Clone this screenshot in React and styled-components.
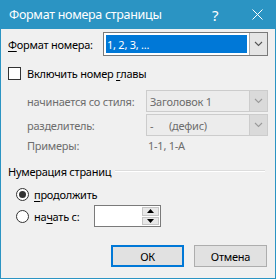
import React from 'react';
import styled, { createGlobalStyle } from 'styled-components';

const GlobalStyle = createGlobalStyle`
    html, body {
        margin: 0;
        padding: 0;
        background: #ffffff;
    }
    body {
        font-family: "Noto Sans", "Open Sans", Arial, sans-serif;
        font-size: 11px;
        letter-spacing: -0.25px;
        color: #000;
    }
`;

const ACCENT = '#2b94c3';

const Dialog = styled.div`
    width: 276px;
    height: 279px;
    box-sizing: border-box;
    border: 1px solid ${ACCENT};
    border-top: none;
    background: #f0f0f0;
    display: flex;
    flex-direction: column;
`;

const TitleBar = styled.div`
    height: 29px;
    background: ${ACCENT};
    color: #fff;
    display: flex;
    align-items: center;
    padding-left: 9px;
    font-size: 12.5px;
    letter-spacing: -0.3px;
    margin: 0 -1px;
`;

const Title = styled.span`
    flex: 1;
`;

const TitleButton = styled.span`
    width: ${(p) => p.w}px;
    display: flex;
    justify-content: center;
    align-items: center;
    font-size: 15px;
`;

const Body = styled.div`
    flex: 1;
    display: flex;
    flex-direction: column;
    padding: 3px 7px 0 7px;
`;

const Row = styled.div`
    display: flex;
    align-items: center;
    height: ${(p) => p.h || 22}px;
    margin-top: ${(p) => p.mt || 0}px;
    padding-left: ${(p) => p.indent || 0}px;
`;

const Label = styled.span`
    color: ${(p) => (p.disabled ? '#6d6d6d' : '#000')};
    width: ${(p) => (p.w ? `${p.w}px` : 'auto')};
    white-space: nowrap;
`;

const Combo = styled.div`
    flex: 1;
    height: ${(p) => p.h || 22}px;
    box-sizing: border-box;
    border: 1px solid ${(p) => (p.disabled ? '#cccccc' : '#7a7a7a')};
    background: ${(p) => (p.disabled ? '#ececec' : '#fff')};
    display: flex;
    align-items: stretch;
`;

const ComboText = styled.div`
    flex: 1;
    display: flex;
    align-items: center;
    padding-left: 3px;
    color: ${(p) => (p.disabled ? '#6d6d6d' : '#000')};
    white-space: pre;
`;

const Selected = styled.div`
    flex: 1;
    margin: 2px;
    background: #0078d7;
    color: #fff;
    display: flex;
    align-items: center;
    padding-left: 1px;
`;

const DropButton = styled.div`
    width: 17px;
    border-left: 1px solid ${(p) => (p.disabled ? '#cccccc' : '#acacac')};
    background: ${(p) => (p.disabled ? '#dadada' : '#e5e5e5')};
    display: flex;
    align-items: center;
    justify-content: center;
`;

const Chevron = ({ color }) => (
    <svg width="9" height="6" viewBox="0 0 9 6">
        <path d="M1 1 L4.5 4.5 L8 1" fill="none" stroke={color} strokeWidth="1.1" />
    </svg>
);

const CheckBox = styled.span`
    width: 13px;
    height: 13px;
    box-sizing: border-box;
    border: 1px solid #333;
    background: #fff;
    margin-right: 6px;
`;

const Radio = styled.span`
    width: 13px;
    height: 13px;
    box-sizing: border-box;
    border-radius: 50%;
    border: 1px solid #333;
    background: #fff;
    margin-right: 5px;
    display: flex;
    align-items: center;
    justify-content: center;
    &::after {
        content: '';
        width: 7px;
        height: 7px;
        border-radius: 50%;
        background: ${(p) => (p.checked ? '#333' : 'transparent')};
    }
`;

const Group = styled.div`
    display: flex;
    align-items: center;
    margin-top: 8px;
    height: 18px;
    padding-right: 3px;
    &::after {
        content: '';
        flex: 1;
        height: 1px;
        background: #dcdcdc;
        border-bottom: 1px solid #fff;
        margin-left: 4px;
    }
`;

const Spin = styled.div`
    width: 67px;
    height: 22px;
    box-sizing: border-box;
    border: 1px solid #7a7a7a;
    background: #fff;
    display: flex;
    justify-content: flex-end;
    padding: 1px;
`;

const SpinButtons = styled.div`
    width: 17px;
    display: flex;
    flex-direction: column;
    gap: 1px;
`;

const SpinHalf = styled.div`
    flex: 1;
    background: #e8e8e8;
    border: 1px solid #c6c6c6;
    display: flex;
    align-items: center;
    justify-content: center;
`;

const Footer = styled.div`
    display: flex;
    justify-content: flex-end;
    gap: 10px;
    margin-top: auto;
    padding: 0 1px 11px 0;
`;

const Button = styled.div`
    width: 73px;
    height: 22px;
    box-sizing: border-box;
    background: #e1e1e1;
    border: ${(p) => (p.primary ? '2px solid #0078d7' : '1px solid #adadad')};
    display: flex;
    align-items: center;
    justify-content: center;
`;

const U = styled.span`
    text-decoration: underline;
    text-underline-offset: 2px;
`;

export default function App() {
    return (
        <>
            <GlobalStyle />
            <Dialog>
                <TitleBar>
                    <Title>Формат номера страницы</Title>
                    <TitleButton w={46}>?</TitleButton>
                    <TitleButton w={38}>
                        <svg width="11" height="11" viewBox="0 0 11 11">
                            <path d="M0.5 0.5 L10.5 10.5 M10.5 0.5 L0.5 10.5" stroke="#fff" strokeWidth="1" />
                        </svg>
                    </TitleButton>
                </TitleBar>
                <Body>
                    <Row h={24}>
                        <Label w={95}><U>Ф</U>ормат номера:</Label>
                        <Combo h={24}>
                            <Selected>1, 2, 3, ...</Selected>
                            <DropButton><Chevron color="#555" /></DropButton>
                        </Combo>
                    </Row>
                    <Row mt={8} h={18}>
                        <CheckBox />
                        <Label>Включить номер <U>г</U>лавы</Label>
                    </Row>
                    <Row mt={8} indent={19}>
                        <Label disabled w={119}>начинается со стиля:</Label>
                        <Combo disabled>
                            <ComboText disabled>Заголовок 1</ComboText>
                            <DropButton disabled><Chevron color="#9a9a9a" /></DropButton>
                        </Combo>
                    </Row>
                    <Row mt={2} indent={19}>
                        <Label disabled w={119}>разделитель:</Label>
                        <Combo disabled>
                            <ComboText disabled>{'-      (дефис)'}</ComboText>
                            <DropButton disabled><Chevron color="#9a9a9a" /></DropButton>
                        </Combo>
                    </Row>
                    <Row h={18} indent={19}>
                        <Label disabled w={121}>Примеры:</Label>
                        <Label disabled>1-1, 1-A</Label>
                    </Row>
                    <Group>Нумерация страниц</Group>
                    <Row mt={3} indent={8}>
                        <Radio checked />
                        <Label><U>п</U>родолжить</Label>
                    </Row>
                    <Row indent={8}>
                        <Radio />
                        <Label w={60}>на<U>ч</U>ать с:</Label>
                        <Spin>
                            <SpinButtons>
                                <SpinHalf>
                                    <svg width="7" height="4" viewBox="0 0 7 4"><path d="M0 4 L3.5 0 L7 4 Z" fill="#000" /></svg>
                                </SpinHalf>
                                <SpinHalf>
                                    <svg width="7" height="4" viewBox="0 0 7 4"><path d="M0 0 L3.5 4 L7 0 Z" fill="#000" /></svg>
                                </SpinHalf>
                            </SpinButtons>
                        </Spin>
                    </Row>
                    <Footer>
                        <Button primary>ОК</Button>
                        <Button>Отмена</Button>
                    </Footer>
                </Body>
            </Dialog>
        </>
    );
}
